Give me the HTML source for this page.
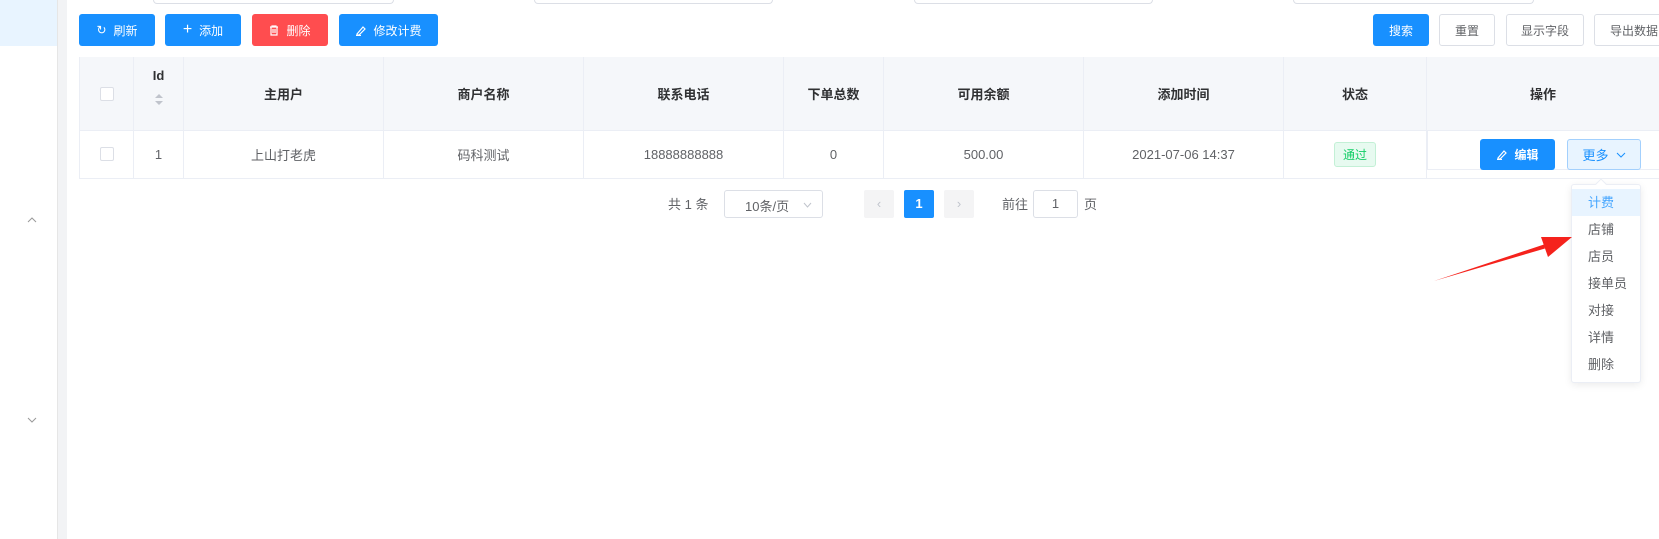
<!DOCTYPE html>
<html><head><meta charset="utf-8"><style>
*{box-sizing:border-box;margin:0;padding:0}
body{width:1659px;height:539px;overflow:hidden;background:#fff;font-family:"Liberation Sans","Noto Sans CJK SC",sans-serif;position:relative;color:#606266;font-size:13px}
.abs{position:absolute}
.side{left:0;top:0;width:58px;height:539px;background:#fff;border-right:1px solid #e6e6e6}
.strip{left:58px;top:0;width:9px;height:539px;background:#f2f3f5}
.inp{height:4px;top:0;border:1px solid #dcdfe6;border-top:none;border-radius:0 0 4px 4px}
.btn{height:32px;top:14px;border-radius:3px;color:#fff;font-size:12px;display:flex;align-items:center;justify-content:center;gap:7px}
.b{background:#1890ff}.r{background:#ff4d4f}
.wb{background:#fff;border:1px solid #dcdfe6;color:#606266}
.th,.td{position:absolute;display:flex;align-items:center;justify-content:center;border-right:1px solid #ebeef5}
.th{top:57px;height:73px;background:#f5f7fa;color:#303133;font-weight:bold}
.td{top:130px;height:48px;color:#606266}
.cb{width:14px;height:14px;border:1px solid #dcdfe6;border-radius:2px;background:#fff}
.dd div{height:27px;line-height:27px;padding-left:16px;color:#606266;font-size:13px}
</style></head><body>
<div class="abs side"><div class="abs" style="left:0;top:0;width:57px;height:46px;background:#e8f4ff"></div>
<svg class="abs" style="left:27px;top:216px" width="10" height="8"><path d="M1 6L5 2L9 6" fill="none" stroke="#999" stroke-width="1"/></svg>
<svg class="abs" style="left:27px;top:416px" width="10" height="8"><path d="M1 2L5 6L9 2" fill="none" stroke="#999" stroke-width="1"/></svg>
</div>
<div class="abs strip"></div>
<div class="abs inp" style="left:153px;width:241px"></div>
<div class="abs inp" style="left:534px;width:239px"></div>
<div class="abs inp" style="left:914px;width:239px"></div>
<div class="abs inp" style="left:1293px;width:241px"></div>

<div class="abs btn b" style="left:79px;width:76px"><span>↻</span>刷新</div>
<div class="abs btn b" style="left:165px;width:76px"><span style="font-size:16px">+</span>添加</div>
<div class="abs btn r" style="left:252px;width:76px"><svg width="10" height="11"><path d="M1 2H9M3 2V1H7V2M2 2V10H8V2M4 4V8M6 4V8" fill="none" stroke="#fff" stroke-width="1.2"/></svg>删除</div>
<div class="abs btn b" style="left:339px;width:99px"><svg width="11" height="11"><path d="M2 9L8 2L10 4L4 10H2ZM1 10.5H6" fill="none" stroke="#fff" stroke-width="1.2"/></svg>修改计费</div>

<div class="abs btn b" style="left:1373px;width:56px">搜索</div>
<div class="abs btn wb" style="left:1439px;width:56px">重置</div>
<div class="abs btn wb" style="left:1506px;width:78px">显示字段</div>
<div class="abs btn wb" style="left:1594px;width:80px">导出数据</div>

<div class="abs" style="left:79px;top:57px;width:1580px;height:122px;border:1px solid #ebeef5;border-right:none"></div>
<div class="th" style="left:80px;width:54px"><div class="cb"></div></div>
<div class="th" style="left:134px;width:50px;flex-direction:column;justify-content:flex-start;padding-top:11px">Id<svg style="margin-top:10px" width="10" height="13"><path d="M1 5L5 1L9 5Z M1 8L5 12L9 8Z" fill="#c0c4cc"/></svg></div>
<div class="th" style="left:184px;width:200px">主用户</div>
<div class="th" style="left:384px;width:200px">商户名称</div>
<div class="th" style="left:584px;width:200px">联系电话</div>
<div class="th" style="left:784px;width:100px">下单总数</div>
<div class="th" style="left:884px;width:200px">可用余额</div>
<div class="th" style="left:1084px;width:200px">添加时间</div>
<div class="th" style="left:1284px;width:143px">状态</div>
<div class="th" style="left:1427px;width:232px;border-right:none">操作</div>
<div class="abs" style="left:80px;top:130px;width:1579px;height:1px;background:#ebeef5"></div>
<div class="td" style="left:80px;width:54px"><div class="cb"></div></div>
<div class="td" style="left:134px;width:50px">1</div>
<div class="td" style="left:184px;width:200px">上山打老虎</div>
<div class="td" style="left:384px;width:200px">码科测试</div>
<div class="td" style="left:584px;width:200px">18888888888</div>
<div class="td" style="left:784px;width:100px">0</div>
<div class="td" style="left:884px;width:200px">500.00</div>
<div class="td" style="left:1084px;width:200px">2021-07-06 14:37</div>
<div class="td" style="left:1284px;width:143px"><span style="background:#e7faf0;border:1px solid #c3f0d6;color:#13ce66;font-size:12px;padding:3px 8px;border-radius:3px">通过</span></div>
<div class="abs" style="left:1427px;top:130px;width:232px;height:40px;border-bottom:1px solid #ebeef5;border-left:1px solid #ebeef5"></div>
<div class="abs btn b" style="left:1480px;top:139px;width:75px;height:31px;font-weight:bold"><svg width="11" height="11"><path d="M2 9L8 2L10 4L4 10H2ZM1 10.5H6" fill="none" stroke="#fff" stroke-width="1.2"/></svg>编辑</div>
<div class="abs btn" style="left:1567px;top:139px;width:74px;height:31px;background:#e8f4ff;border:1px solid #a3d0fd;color:#1890ff;font-size:13px">更多 <svg width="10" height="6"><path d="M1 1L5 5L9 1" fill="none" stroke="#1890ff"/></svg></div>

<div class="abs" style="left:668px;top:194px;">共 1 条</div>
<div class="abs" style="left:724px;top:190px;width:99px;height:28px;border:1px solid #dcdfe6;border-radius:3px;padding:5px 0 0 20px">10条/页<svg style="position:absolute;right:10px;top:11px" width="9" height="6"><path d="M1 1L4.5 5L8 1" fill="none" stroke="#c0c4cc"/></svg></div>
<div class="abs" style="left:864px;top:190px;width:30px;height:28px;background:#f4f4f5;border-radius:2px;color:#c0c4cc;text-align:center;line-height:28px">‹</div>
<div class="abs" style="left:904px;top:190px;width:30px;height:28px;background:#1890ff;border-radius:2px;color:#fff;text-align:center;line-height:28px;font-weight:bold">1</div>
<div class="abs" style="left:944px;top:190px;width:30px;height:28px;background:#f4f4f5;border-radius:2px;color:#c0c4cc;text-align:center;line-height:28px">›</div>
<div class="abs" style="left:1002px;top:194px">前往</div>
<div class="abs" style="left:1033px;top:190px;width:45px;height:28px;border:1px solid #dcdfe6;border-radius:3px;text-align:center;line-height:26px">1</div>
<div class="abs" style="left:1084px;top:194px">页</div>

<div class="abs dd" style="left:1571px;top:184px;width:70px;height:199px;background:#fff;border:1px solid #ebeef5;border-radius:3px;box-shadow:0 2px 8px rgba(0,0,0,.08);padding-top:4px">
<div style="background:#e8f4ff;color:#46a6ff">计费</div><div>店铺</div><div>店员</div><div>接单员</div><div>对接</div><div>详情</div><div>删除</div></div>
<div class="abs" style="left:1597px;top:180px;width:8px;height:8px;background:#fff;border-left:1px solid #ebeef5;border-top:1px solid #ebeef5;transform:rotate(45deg)"></div>
<svg class="abs" style="left:0;top:0" width="1659" height="539"><path d="M1434 281L1544 244.5L1545 248.5Z" fill="#f5221c"/><path d="M1572 237L1541 237L1548 257Z" fill="#f5221c"/></svg>
</body></html>
